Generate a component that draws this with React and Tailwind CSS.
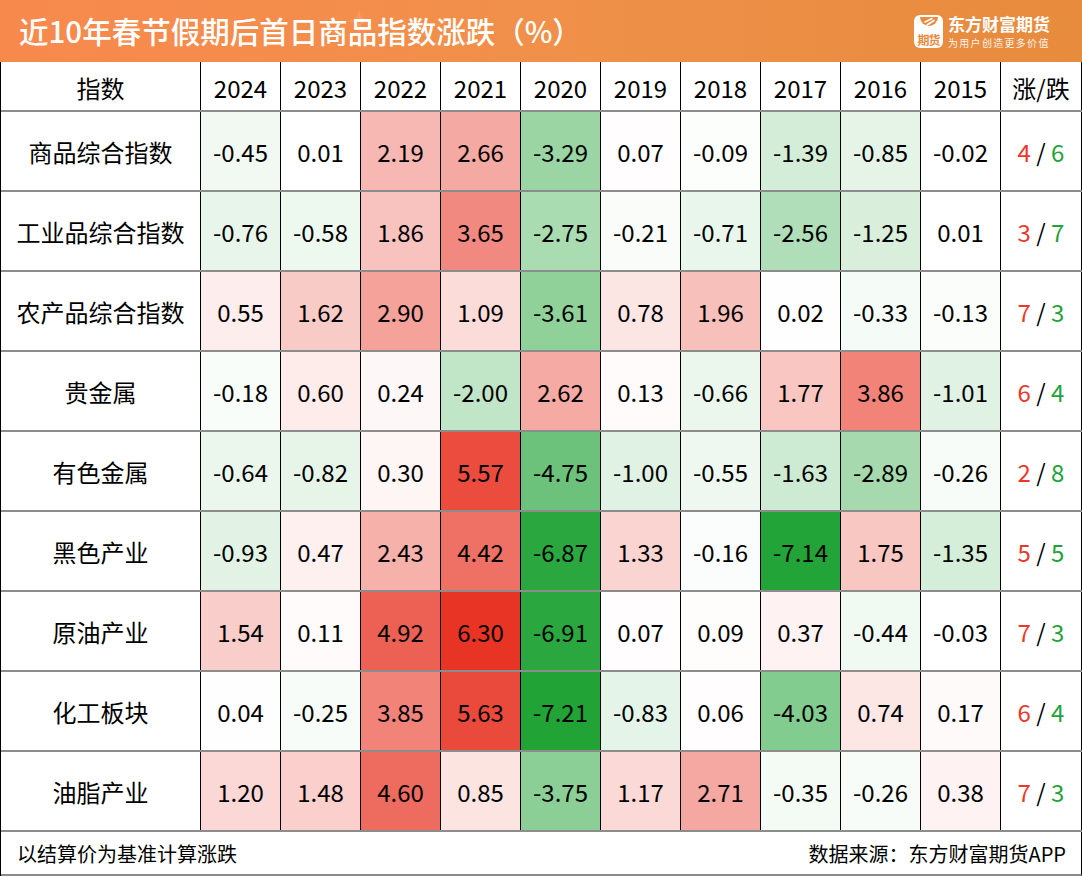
import React from "react";

const years = ["2024", "2023", "2022", "2021", "2020", "2019", "2018", "2017", "2016", "2015"];

const rows = [
  ["商品综合指数", [-0.45, 0.01, 2.19, 2.66, -3.29, 0.07, -0.09, -1.39, -0.85, -0.02], 4, 6],
  ["工业品综合指数", [-0.76, -0.58, 1.86, 3.65, -2.75, -0.21, -0.71, -2.56, -1.25, 0.01], 3, 7],
  ["农产品综合指数", [0.55, 1.62, 2.9, 1.09, -3.61, 0.78, 1.96, 0.02, -0.33, -0.13], 7, 3],
  ["贵金属", [-0.18, 0.6, 0.24, -2.0, 2.62, 0.13, -0.66, 1.77, 3.86, -1.01], 6, 4],
  ["有色金属", [-0.64, -0.82, 0.3, 5.57, -4.75, -1.0, -0.55, -1.63, -2.89, -0.26], 2, 8],
  ["黑色产业", [-0.93, 0.47, 2.43, 4.42, -6.87, 1.33, -0.16, -7.14, 1.75, -1.35], 5, 5],
  ["原油产业", [1.54, 0.11, 4.92, 6.3, -6.91, 0.07, 0.09, 0.37, -0.44, -0.03], 7, 3],
  ["化工板块", [0.04, -0.25, 3.85, 5.63, -7.21, -0.83, 0.06, -4.03, 0.74, 0.17], 6, 4],
  ["油脂产业", [1.2, 1.48, 4.6, 0.85, -3.75, 1.17, 2.71, -0.35, -0.26, 0.38], 7, 3],
];

const RED = [232, 52, 36];
const GREEN = [33, 163, 54];
const MAXP = 6.3;
const MAXN = 7.21;

function cellColor(v) {
  let t, c;
  if (v >= 0) {
    t = Math.min(v / MAXP, 1);
    c = RED;
  } else {
    t = Math.min(-v / MAXN, 1);
    c = GREEN;
  }
  const mix = (i) => Math.round(255 + (c[i] - 255) * t);
  return `rgb(${mix(0)}, ${mix(1)}, ${mix(2)})`;
}

function Logo() {
  return (
    <div className="flex items-center gap-[5px]">
      <div className="w-[29px] h-[33px] bg-white rounded-[6px] flex flex-col items-center justify-between pt-[2px] pb-[2px]">
        <svg width="20" height="12" viewBox="0 0 20 12">
          <path d="M1 0 H19 A9 9 0 0 1 1 0 Z" fill="#ea8a3f" />
          <path d="M6 5 L13 1.5 M8 8 L15 3.5" stroke="#fff" strokeWidth="1.6" strokeLinecap="round" />
        </svg>
        <span className="text-[12px] leading-[13px] font-bold text-[#ea8a3f] tracking-[-1px]">期货</span>
      </div>
      <div className="flex flex-col text-white">
        <span className="text-[17px] leading-[19px] font-bold">东方财富期货</span>
        <span className="text-[10px] leading-[11px] tracking-[1.3px] mt-[4px] opacity-90">为用户创造更多价值</span>
      </div>
    </div>
  );
}

export default function App() {
  return (
    <div className="w-[1082px] h-[877px] bg-white font-['Noto_Sans_CJK_SC','Noto_Sans',sans-serif] text-black">
      <div className="relative h-[62px] bg-gradient-to-r from-[#f8894d] via-[#f0904a] to-[#e78b3c] flex items-center justify-between pl-[19px] pr-[32px] overflow-hidden">
        <svg className="absolute left-[347px] top-[8px] opacity-40" width="24" height="26" viewBox="0 0 24 26">
          <path d="M12 0 C13 9 15 12 24 13 C15 14 13 17 12 26 C11 17 9 14 0 13 C9 12 11 9 12 0 Z" fill="#fbb07f" />
        </svg>
        <h1 className="relative text-[29.5px] leading-none font-medium text-white">近10年春节假期后首日商品指数涨跌（%）</h1>
        <Logo />
      </div>

      <div className="border-l border-black">
        <div className="grid grid-cols-[200px_repeat(10,80px)_81px] h-[50px] border-b-2 border-[#8c8c8c]">
          <div className="border-r border-black flex items-center justify-center text-[24px] pt-[4px]">指数</div>
          {years.map((y) => (
            <div key={y} className="border-r border-black flex items-center justify-center text-[24px] pt-[4px]">{y}</div>
          ))}
          <div className="border-r border-black flex items-center justify-center text-[24px] pt-[4px]">涨/跌</div>
        </div>

        {rows.map(([name, vals, up, down]) => (
          <div key={name} className="grid grid-cols-[200px_repeat(10,80px)_81px] h-[80px] border-b-2 border-[#8c8c8c]">
            <div className="border-r border-black flex items-center justify-center text-[24px] pt-[2px]">{name}</div>
            {vals.map((v, i) => (
              <div
                key={i}
                className="border-r border-black flex items-center justify-center text-[24px] pt-[2px]"
                style={{ backgroundColor: cellColor(v) }}
              >
                {v.toFixed(2)}
              </div>
            ))}
            <div className="border-r border-black flex items-center justify-center text-[24px] whitespace-pre pt-[2px]">
              <span className="text-[#e8392b]">{up}</span>
              <span> / </span>
              <span className="text-[#22a33a]">{down}</span>
            </div>
          </div>
        ))}

        <div className="h-[44px] border-b-2 border-r border-[#8c8c8c] border-r-black flex items-center justify-between pl-[16px] pr-[15px] text-[20px] pt-[1px]">
          <span>以结算价为基准计算涨跌</span>
          <span>数据来源：东方财富期货APP</span>
        </div>
      </div>
    </div>
  );
}
